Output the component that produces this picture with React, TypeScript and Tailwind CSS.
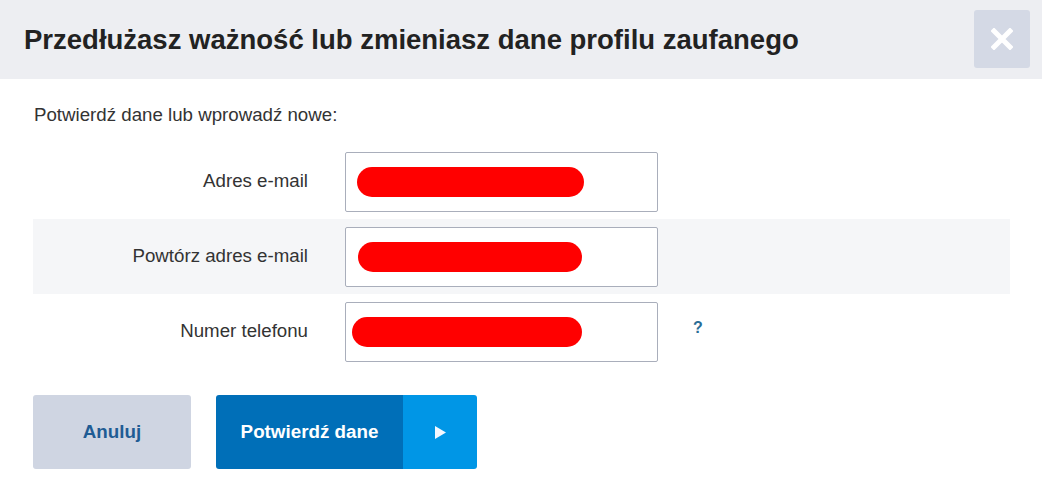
import React from "react";

const font = { fontFamily: '"Liberation Sans", Arial, sans-serif' };

function Row({ label, blob, shaded, help }: { label: string; blob: string; shaded?: boolean; help?: boolean }) {
  return (
    <div className={`flex h-[75px] items-center ${shaded ? "bg-[#f5f6f8]" : ""}`}>
      <div className="w-[275px] text-right text-[18.7px] text-[#333333]">{label}</div>
      <div className="ml-[37px] flex h-[60px] w-[313px] items-center rounded-[2px] border border-[#a9aebb] bg-white">
        <div className={`h-[30px] rounded-full bg-[#ff0000] ${blob}`} />
      </div>
      {help && <div className="mb-[8px] ml-[35px] text-[16px] font-bold text-[#2a6d96]">?</div>}
    </div>
  );
}

export default function App() {
  return (
    <div className="h-[493px] w-[1042px] bg-white" style={font}>
      <div className="flex h-[79px] items-center justify-between bg-[#edeef2] pl-[24px] pr-[12px]">
        <h1 className="text-[27.5px] font-bold text-[#222222]">
          Przedłużasz ważność lub zmieniasz dane profilu zaufanego
        </h1>
        <button className="mb-[2px] flex h-[58px] w-[56px] items-center justify-center rounded-[3px] bg-[#d4d9e5]">
          <svg width="22" height="22" viewBox="0 0 22 22">
            <path d="M3 3 L19 19 M19 3 L3 19" stroke="white" strokeWidth="5" strokeLinecap="square" />
          </svg>
        </button>
      </div>
      <div className="pl-[33px] pr-[32px]">
        <p className="pt-[25px] pl-[1px] text-[18.7px] leading-[22px] text-[#333333]">Potwierdź dane lub wprowadź nowe:</p>
        <div className="mt-[18px]">
          <Row label="Adres e-mail" blob="ml-[11px] w-[227px]" />
          <Row label="Powtórz adres e-mail" blob="ml-[12px] w-[224px]" shaded />
          <Row label="Numer telefonu" blob="ml-[6px] w-[230px]" help />
        </div>
        <div className="mt-[26px] flex gap-[25px]">
          <button className="flex h-[74px] w-[158px] items-center justify-center rounded-[3px] bg-[#cfd5e2] text-[18.8px] font-bold text-[#1f5c94]">
            Anuluj
          </button>
          <button className="flex h-[74px] w-[261px] overflow-hidden rounded-[3px] text-white">
            <span className="flex h-full w-[187px] items-center justify-center bg-[#006fb8] text-[18.8px] font-bold">
              Potwierdź dane
            </span>
            <span className="flex h-full flex-1 items-center justify-center bg-[#0096e6]">
              <svg width="11" height="13" viewBox="0 0 11 13">
                <path d="M0 0 L11 6.5 L0 13 Z" fill="#f4f8ff" />
              </svg>
            </span>
          </button>
        </div>
      </div>
    </div>
  );
}
